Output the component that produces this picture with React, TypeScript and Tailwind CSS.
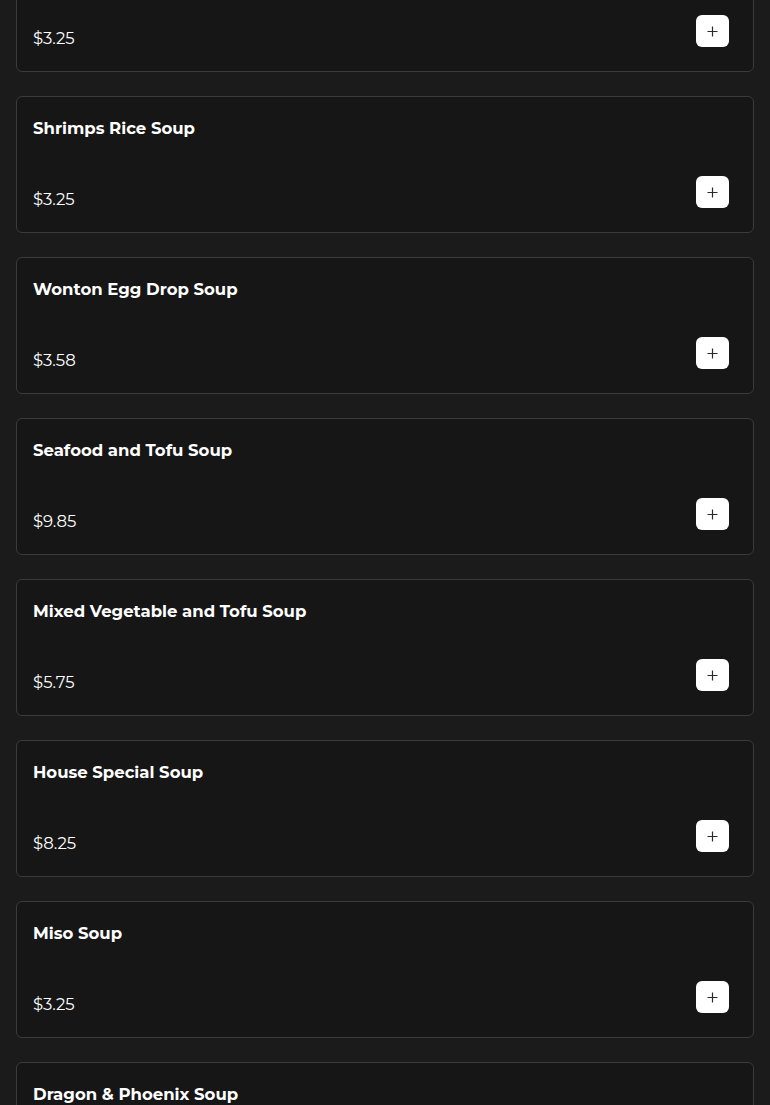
import React from "react";

const items = [
  { name: "Egg Drop Soup", price: "$3.25" },
  { name: "Shrimps Rice Soup", price: "$3.25" },
  { name: "Wonton Egg Drop Soup", price: "$3.58" },
  { name: "Seafood and Tofu Soup", price: "$9.85" },
  { name: "Mixed Vegetable and Tofu Soup", price: "$5.75" },
  { name: "House Special Soup", price: "$8.25" },
  { name: "Miso Soup", price: "$3.25" },
  { name: "Dragon & Phoenix Soup", price: "$6.95" },
];

function Plus() {
  return (
    <svg width="11" height="11" viewBox="0 0 11 11" fill="none">
      <path d="M5.5 0.5v10M0.5 5.5h10" stroke="#2a2a2a" strokeWidth="1.2" />
    </svg>
  );
}

export default function App() {
  return (
    <div
      className="bg-[#1b1b1b] px-4 overflow-hidden h-[1105px]"
      style={{ fontFamily: "Montserrat, 'Open Sans', 'Liberation Sans', sans-serif" }}
    >
      <div className="flex flex-col gap-6 -mt-[65px]">
        {items.map((it) => (
          <div
            key={it.name}
            className="h-[137px] shrink-0 rounded-md border border-[#3b3b3b] bg-[#161616] pl-4 pr-6 pt-[17px] pb-6 flex flex-col justify-between"
          >
            <div className="text-[16.5px] leading-[28px] font-bold text-white">
              {it.name}
            </div>
            <div className="flex items-end justify-between">
              <span className="text-[16.5px] leading-[24px] text-white mb-[-3px]">{it.price}</span>
              <button className="w-[33px] h-8 rounded-md bg-white flex items-center justify-center">
                <Plus />
              </button>
            </div>
          </div>
        ))}
      </div>
    </div>
  );
}
